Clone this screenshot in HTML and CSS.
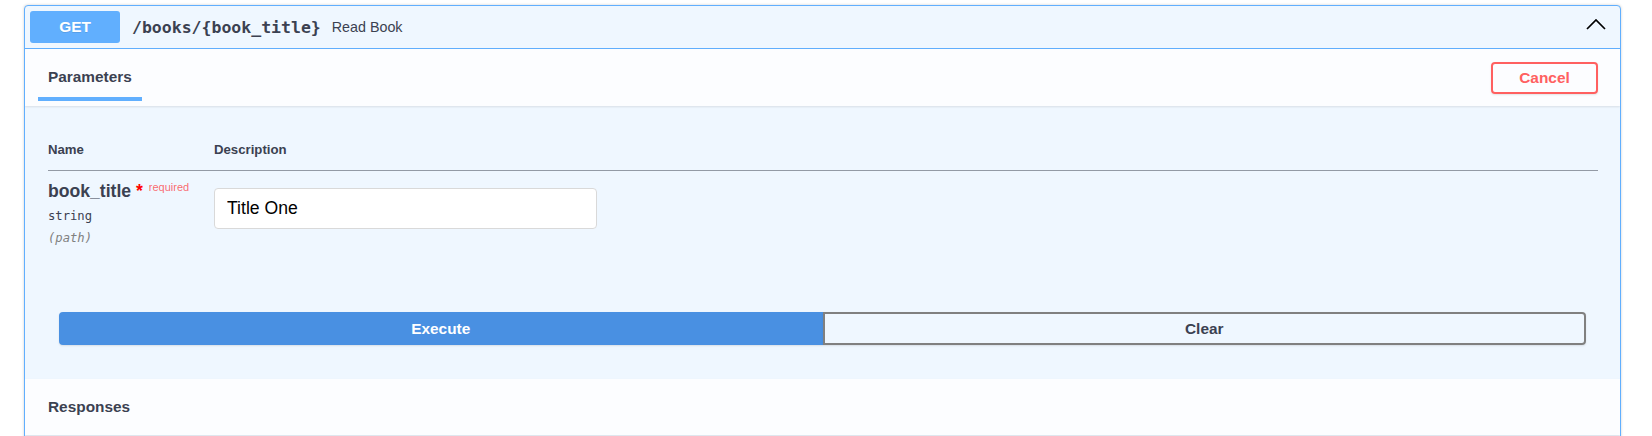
FILE: index.html
```html
<!DOCTYPE html>
<html lang="en">
<head>
<meta charset="utf-8">
<title>Read Book</title>
<link rel="stylesheet" href="styles.css">
</head>
<body>
<div class="page">
  <div class="opblock">
    <div class="summary">
      <span class="method">GET</span>
      <span class="path">/books/{book_title}</span>
      <span class="summary-desc">Read Book</span>
      <svg class="arrow" width="20" height="20" viewBox="0 0 20 20" aria-hidden="true">
        <polyline points="1,12 10,3 19,12" fill="none" stroke="#000" stroke-width="1.7"/>
      </svg>
    </div>
    <div class="section-header">
      <span class="tab">Parameters</span>
      <button class="btn-cancel">Cancel</button>
    </div>
    <div class="table-container">
      <table class="params">
        <thead>
          <tr><th class="col-name">Name</th><th>Description</th></tr>
        </thead>
        <tbody>
          <tr>
            <td class="cell-name">
              <div class="param-name">book_title<span class="star">&nbsp;*</span><span class="req">required</span></div>
              <div class="param-type">string</div>
              <div class="param-in">(path)</div>
            </td>
            <td class="cell-desc">
              <input class="param-input" type="text" value="Title One">
            </td>
          </tr>
        </tbody>
      </table>
    </div>
    <div class="execute-wrapper">
      <button class="btn-execute">Execute</button>
      <button class="btn-clear">Clear</button>
    </div>
    <div class="responses-header">Responses</div>
    <div class="responses-body"></div>
  </div>
</div>
</body>
</html>
```

FILE: styles.css
```css
html, body {
  margin: 0;
  padding: 0;
  background: #ffffff;
}

body {
  font-family: "Liberation Sans", Arial, sans-serif;
  color: #3b4151;
}

.page {
  padding: 5px 31px 0 24px;
}

.opblock {
  border: 1px solid #61affe;
  border-radius: 4px;
  background: #eff7ff;
  box-shadow: 0 0 3px rgba(0, 0, 0, 0.19);
  overflow: hidden;
}

.summary {
  display: flex;
  align-items: center;
  padding: 5px 5px;
  height: 32px;
  border-bottom: 1px solid #61affe;
}

.method {
  width: 90px;
  height: 32px;
  line-height: 32px;
  text-align: center;
  background: #61affe;
  color: #ffffff;
  border-radius: 3px;
  font-size: 15.4px;
  font-weight: 700;
  text-shadow: 0 1px 0 rgba(0, 0, 0, 0.1);
}

.path {
  padding: 0 11px 0 12px;
  font-family: "DejaVu Sans Mono", "Liberation Mono", monospace;
  font-size: 16.5px;
  font-weight: 700;
  color: #3b4151;
}

.summary-desc {
  font-size: 14.3px;
  color: #3b4151;
}

.arrow {
  margin-left: auto;
  margin-right: 9px;
}

.section-header {
  display: flex;
  align-items: center;
  height: 57px;
  padding: 0 22px 0 23px;
  background: #fcfdff;
  box-shadow: 0 1px 2px rgba(0, 0, 0, 0.1);
  position: relative;
}

.tab {
  position: relative;
  font-size: 15.4px;
  font-weight: 700;
  line-height: 18px;
  margin-top: -2px;
  color: #3b4151;
}

.tab::after {
  content: "";
  position: absolute;
  left: -10px;
  right: -10px;
  bottom: -15px;
  height: 4px;
  background: #61affe;
}

.btn-cancel {
  margin-left: auto;
  width: 107px;
  height: 32px;
  border: 2px solid #ff6060;
  border-radius: 4px;
  background: transparent;
  color: #ff6060;
  font-family: "Liberation Sans", Arial, sans-serif;
  font-size: 15.4px;
  font-weight: 700;
  box-shadow: 0 1px 2px rgba(0, 0, 0, 0.1);
  padding: 0;
}

.table-container {
  padding: 22px 22px 0 23px;
}

.params {
  width: 100%;
  border-collapse: collapse;
}

.params th {
  text-align: left;
  font-size: 13.2px;
  font-weight: 700;
  line-height: 15px;
  padding: 14px 0 13px;
  border-bottom: 1px solid rgba(59, 65, 81, 0.3);
  color: #3b4151;
}

.params th.col-name {
  width: 166px;
}

.params td {
  vertical-align: top;
  padding: 0;
}

.params td.cell-name {
  padding: 6px 0 3px;
}

.params td.cell-desc {
  padding-top: 17px;
}

.param-name {
  font-size: 17.6px;
  font-weight: 700;
  line-height: 20px;
  color: #3b4151;
  white-space: nowrap;
}

.star {
  color: #ff0000;
}

.req {
  font-size: 11px;
  font-weight: 400;
  color: rgba(255, 0, 0, 0.6);
  padding-left: 6px;
  vertical-align: 6px;
}

.param-type {
  margin-top: 7px;
  font-family: "DejaVu Sans Mono", "Liberation Mono", monospace;
  font-size: 12.2px;
  line-height: 16px;
  color: #3b4151;
}

.param-in {
  margin-top: 6px;
  font-family: "DejaVu Sans Mono", "Liberation Mono", monospace;
  font-size: 12.2px;
  font-style: italic;
  line-height: 16px;
  color: #808080;
}

.param-input {
  display: block;
  box-sizing: border-box;
  width: 383px;
  height: 41px;
  margin: 0;
  padding: 0 12px;
  border: 1px solid #d9d9d9;
  border-radius: 4px;
  background: #ffffff;
  font-family: "Liberation Sans", Arial, sans-serif;
  font-size: 17.6px;
  color: #000000;
  outline: none;
}

.execute-wrapper {
  display: flex;
  padding: 63px 34px 34px 34px;
}

.btn-execute,
.btn-clear {
  flex: 1 1 0;
  height: 33px;
  padding: 0;
  font-family: "Liberation Sans", Arial, sans-serif;
  font-size: 15.4px;
  font-weight: 700;
  box-shadow: 0 1px 2px rgba(0, 0, 0, 0.1);
}

.btn-execute {
  background: #4990e2;
  border: 2px solid #4990e2;
  color: #ffffff;
  border-radius: 4px 0 0 4px;
}

.btn-clear {
  background: transparent;
  border: 2px solid #808080;
  color: #3b4151;
  border-radius: 0 4px 4px 0;
}

.responses-header {
  display: flex;
  align-items: center;
  height: 56px;
  padding: 0 23px;
  background: #fcfdff;
  box-shadow: 0 1px 2px rgba(0, 0, 0, 0.1);
  font-size: 15.4px;
  font-weight: 700;
  color: #3b4151;
  position: relative;
}

.responses-body {
  height: 60px;
}
```
